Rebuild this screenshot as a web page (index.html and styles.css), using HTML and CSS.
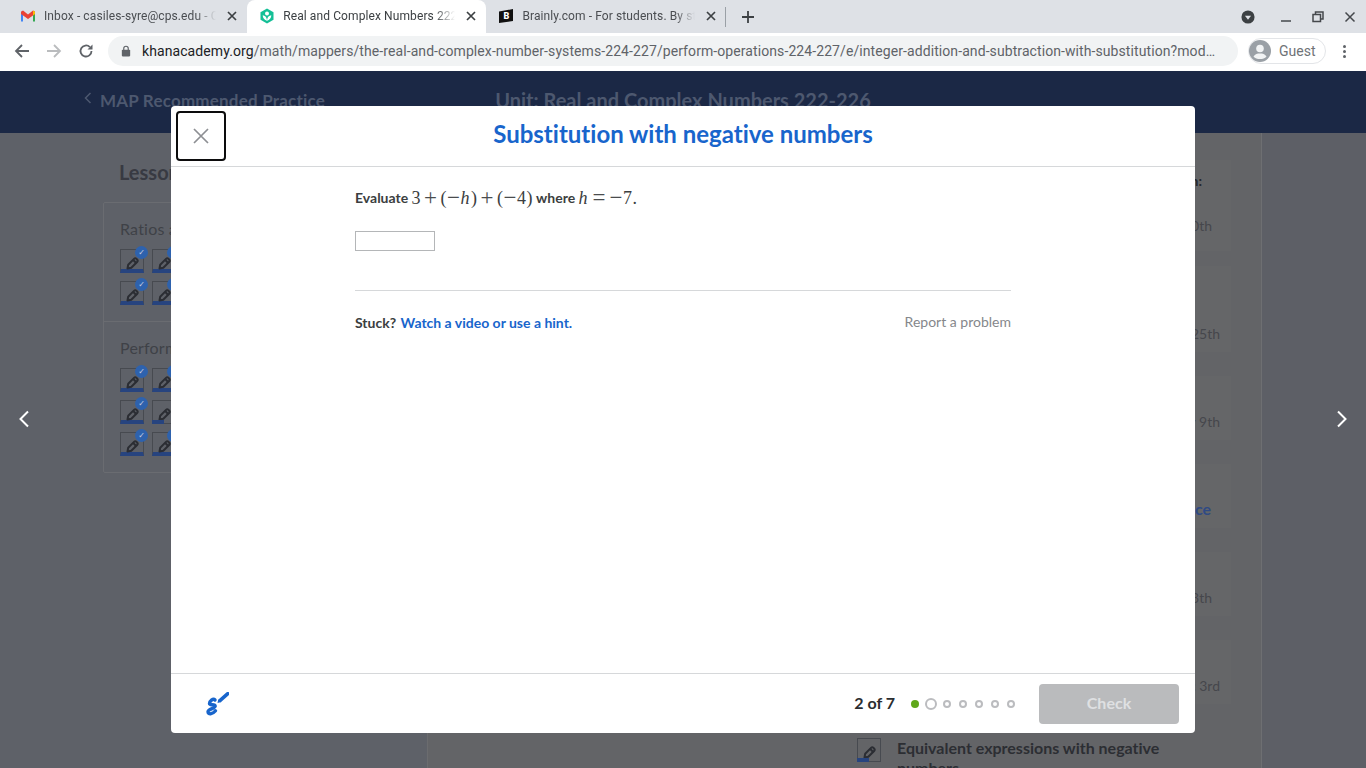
FILE: index.html
```html
<!DOCTYPE html>
<html lang="en">
<head>
<meta charset="utf-8">
<title>Real and Complex Numbers 222-226</title>
<link rel="stylesheet" href="styles.css">
</head>
<body>
<svg class="defs" width="0" height="0" aria-hidden="true">
  <symbol id="pencil" viewBox="0 0 24 24">
    <path d="M7.500 19.500l.7-3.800 5.800-5.800a1.800 1.800 0 0 1 2.500 0l.6.6a1.800 1.800 0 0 1 0 2.500l-5.800 5.800z" fill="none" stroke="currentColor" stroke-width="2" stroke-linejoin="round"/>
    <path d="M13 10.800l3.400 3.400" stroke="currentColor" stroke-width="2"/>
  </symbol>
  <symbol id="tab-x" viewBox="0 0 10 10">
    <path d="M1 1l8 8M9 1l-8 8" stroke="currentColor" stroke-width="1.7" fill="none"/>
  </symbol>
</svg>

<header class="chrome">
  <div class="tabstrip">
    <div class="tab">
      <svg class="favicon" viewBox="0 0 16 16"><path d="M1 13.500V4l2 -1v10.500z" fill="#4285f4"/><path d="M13 13.500V3l2 1v9.500z" fill="#34a853"/><path d="M1 3.800l2-1.300 5 4 5-4 2 1.300V6L8 11 1 6z" fill="#ea4335"/><path d="M13 2.500l2 1.300V6l-2 1.600z" fill="#fbbc04"/></svg>
      <span class="tab-title">Inbox - casiles-syre@cps.edu - C</span>
      <svg class="tab-close"><use href="#tab-x"/></svg>
    </div>
    <div class="tab tab-active">
      <svg class="favicon" viewBox="0 0 16 16"><path d="M8 .5l6.500 3.700v7.600L8 15.500l-6.500-3.700V4.200z" fill="#14bf96"/><circle cx="8" cy="5.500" r="2" fill="#fff"/><path d="M3.700 7.300C6 7.500 7.500 9 8 12.300 8.500 9 10 7.500 12.300 7.300 12.300 10 10.500 12.300 8 12.800 5.500 12.300 3.700 10 3.700 7.300z" fill="#fff"/></svg>
      <span class="tab-title">Real and Complex Numbers 222</span>
      <svg class="tab-close"><use href="#tab-x"/></svg>
    </div>
    <div class="tab">
      <svg class="favicon" viewBox="0 0 16 16"><path d="M1 3.500L15 1v12L1 15z" fill="#111"/></svg>
      <span class="brainly-b">B</span>
      <span class="tab-title">Brainly.com - For students. By st</span>
      <svg class="tab-close"><use href="#tab-x"/></svg>
    </div>
    <span class="tab-sep"></span>
    <svg class="new-tab" viewBox="0 0 12 12"><path d="M6 0v12M0 6h12" stroke="#3c4043" stroke-width="1.800"/></svg>
    <div class="window-controls">
      <span class="profile-dot"><svg viewBox="0 0 16 16"><circle cx="8" cy="8" r="7.500" fill="#3c4043"/><path d="M4.500 6.500h7L8 11z" fill="#dee1e6"/></svg></span>
      <svg class="win-btn" viewBox="0 0 12 12"><path d="M1 10h10" stroke="#45484c" stroke-width="1.500"/></svg>
      <svg class="win-btn" viewBox="0 0 12 12"><path d="M3.500 3V1h7.500v7H8.500" fill="none" stroke="#45484c" stroke-width="1.500"/><rect x="1" y="3.500" width="7.500" height="7" fill="none" stroke="#45484c" stroke-width="1.500"/></svg>
      <svg class="win-btn" viewBox="0 0 12 12"><path d="M1.500 1.500l9 9M10.500 1.500l-9 9" stroke="#45484c" stroke-width="1.500"/></svg>
    </div>
  </div>
  <div class="toolbar">
    <svg class="tool" viewBox="0 0 16 16"><path d="M15 8H2.500M8 2L2 8l6 6" fill="none" stroke="#5f6368" stroke-width="1.800"/></svg>
    <svg class="tool" viewBox="0 0 16 16"><path d="M1 8h12.500M8 2l6 6-6 6" fill="none" stroke="#babcbe" stroke-width="1.800"/></svg>
    <svg class="tool" viewBox="0 0 16 16"><path d="M13.500 8a5.500 5.500 0 1 1-1.600-3.900" fill="none" stroke="#5f6368" stroke-width="1.800"/><path d="M14.500 1.500v5h-5z" fill="#5f6368"/></svg>
    <div class="omnibox">
      <svg class="lock" viewBox="0 0 12 14"><rect x="1" y="5.500" width="10" height="8" rx="1" fill="#5f6368"/><path d="M3.300 6V4a2.700 2.700 0 0 1 5.400 0v2" fill="none" stroke="#5f6368" stroke-width="1.400"/></svg>
      <span class="url"><span class="url-host">khanacademy.org</span>/math/mappers/the-real-and-complex-number-systems-224-227/perform-operations-224-227/e/integer-addition-and-subtraction-with-substitution?mod…</span>
    </div>
    <div class="guest">
      <svg class="avatar" viewBox="0 0 22 22"><circle cx="11" cy="11" r="11" fill="#9aa0a6"/><circle cx="11" cy="8.500" r="3.800" fill="#f1f3f4"/><path d="M4.500 16.500C6 13.800 8.500 13.500 11 13.500s5 .3 6.500 3C16 18.500 13.500 19 11 19s-5-.5-6.500-2.500z" fill="#f1f3f4"/></svg>
      <span>Guest</span>
    </div>
    <div class="kebab"><i></i><i></i><i></i></div>
  </div>
</header>

<main class="app">
  <div class="app-header">
    <div class="crumb">
      <svg class="crumb-chevron" viewBox="0 0 8 12"><path d="M6.500 1L1.500 6l5 5" fill="none" stroke="currentColor" stroke-width="1.500"/></svg>
      <span>MAP Recommended Practice</span>
    </div>
    <div class="unit-title">Unit: Real and Complex Numbers 222-226</div>
  </div>

  <div class="app-body">
    <aside class="sidebar">
      <h2 class="lessons-title">Lessons</h2>
      <div class="lesson-card">
        <section class="lesson-group">
          <h3>Ratios and rates</h3>
          <div class="skill-grid">
            <span class="skill done"><svg><use href="#pencil"/></svg><b class="badge">✓</b></span>
            <span class="skill done"><svg><use href="#pencil"/></svg><b class="badge">✓</b></span>
            <span class="skill done"><svg><use href="#pencil"/></svg><b class="badge">✓</b></span>
            <span class="skill done"><svg><use href="#pencil"/></svg><b class="badge">✓</b></span>
          </div>
        </section>
        <section class="lesson-group">
          <h3>Perform operations</h3>
          <div class="skill-grid">
            <span class="skill done"><svg><use href="#pencil"/></svg><b class="badge">✓</b></span>
            <span class="skill done"><svg><use href="#pencil"/></svg><b class="badge">✓</b></span>
            <span class="skill done"><svg><use href="#pencil"/></svg><b class="badge">✓</b></span>
            <span class="skill partial"><svg><use href="#pencil"/></svg></span>
            <span class="skill done"><svg><use href="#pencil"/></svg><b class="badge">✓</b></span>
            <span class="skill done"><svg><use href="#pencil"/></svg><b class="badge">✓</b></span>
          </div>
        </section>
      </div>
    </aside>

    <div class="center">
      <div class="assign-col">
        <div class="assign assign-head inset"><strong>Up next for you in this lesson:</strong><span>Due Oct 20th</span></div>
        <div class="assign assign-tall"><span>Due Oct 25th</span></div>
        <div class="assign"><span>Due Nov 9th</span></div>
        <div class="assign inset-link"><a>Practice</a></div>
        <div class="assign inset"><span>Due Nov 13th</span></div>
        <div class="assign"><span>Due Dec 3rd</span></div>
        <div class="assign assign-last">
          <span class="skill small"><svg><use href="#pencil"/></svg></span>
          <strong>Equivalent expressions with negative numbers</strong>
        </div>
      </div>
    </div>
    <div class="gutter"></div>
  </div>

  <svg class="nav-arrow nav-prev" viewBox="0 0 12 18"><path d="M10 1.500L2.500 9l7.500 7.500" fill="none" stroke="#fff" stroke-width="2"/></svg>
  <svg class="nav-arrow nav-next" viewBox="0 0 12 18"><path d="M2 1.500L9.500 9 2 16.500" fill="none" stroke="#fff" stroke-width="2"/></svg>

  <div class="modal" role="dialog">
    <div class="modal-head">
      <button class="modal-close" aria-label="Close"><svg viewBox="0 0 16 16"><path d="M1 1l14 14M15 1L1 15" stroke="#8d8f93" stroke-width="1.700" fill="none"/></svg></button>
      <h1>Substitution with negative numbers</h1>
    </div>
    <div class="modal-body">
      <div class="exercise">
        <p class="question">Evaluate <span class="math">3<span class="op bin">+</span>(<span class="op">−</span><i>h</i>)<span class="op bin">+</span>(<span class="op">−</span>4)</span> where <span class="math"><i>h</i><span class="op rel">=</span><span class="op">−</span>7.</span></p>
        <div class="answer"></div>
        <div class="hint-row">
          <div class="stuck">Stuck? <a>Watch a video or use a hint.</a></div>
          <a class="report">Report a problem</a>
        </div>
      </div>
    </div>
    <div class="modal-foot">
      <svg class="scribble" viewBox="0 0 24 24"><path d="M10 8C8 5.800 4.500 9.500 4.500 11.500C4.500 13.800 10 11.800 10.200 14.200C10.400 16.300 3 17 3 19.800C3 22.800 7.500 22.500 10.500 18.800" fill="none" stroke="#1865cc" stroke-width="3.400" stroke-linecap="round" stroke-linejoin="round"/><path d="M15.200 8.300L22.800 1.700" stroke="#1865cc" stroke-width="3.600" stroke-linecap="round"/><path d="M12.500 11L13.300 7.200 16.400 10z" fill="#1865cc"/></svg>
      <div class="progress">
        <span class="progress-label">2 of 7</span>
        <div class="dots">
          <i class="dot dot-done"></i><i class="dot dot-now"></i><i class="dot"></i><i class="dot"></i><i class="dot"></i><i class="dot"></i><i class="dot"></i>
        </div>
        <button class="check">Check</button>
      </div>
    </div>
  </div>
</main>
</body>
</html>
```
FILE: styles.css
```css
* { box-sizing: border-box; }
html, body { margin: 0; height: 768px; overflow: hidden; }
body { display: flex; flex-direction: column; font-family: Lato, "Liberation Sans", sans-serif; font-variant-ligatures: none; background: #fff; }
.defs { position: absolute; }
h1, h2, h3, p { margin: 0; }

/* browser chrome */
.chrome { flex: none; height: 71px; font-family: Roboto, "Liberation Sans", sans-serif; }
.tabstrip { height: 33px; background: #dee1e6; display: flex; align-items: center; padding-left: 8px; position: relative; }
.tab { width: 239.200px; height: 33px; display: flex; align-items: center; padding: 0 8px 1px 12px; color: #4a4d51; font-size: 12px; position: relative; flex: none; }
.tab-active { background: #fff; border-radius: 8px 8px 0 0; color: #3c4043; }
.favicon { width: 16px; height: 16px; flex: none; margin-right: 8px; }
.tab-title { flex: 1; overflow: hidden; white-space: nowrap; letter-spacing: .1px; -webkit-mask-image: linear-gradient(to right, #000 calc(100% - 22px), transparent calc(100% - 2px)); mask-image: linear-gradient(to right, #000 calc(100% - 22px), transparent calc(100% - 2px)); }
.tab-close { width: 10px; height: 10px; color: #3c4043; flex: none; margin: 0 2px 0 9px; }
.brainly-b { position: absolute; left: 12px; width: 16px; text-align: center; color: #fff; font: 900 9px Roboto, sans-serif; }
.tab-sep { width: 1px; height: 20px; margin-left: -1px; background: #9aa0a6; flex: none; }
.new-tab { width: 12px; height: 12px; margin-left: 16px; flex: none; }
.window-controls { margin-left: auto; display: flex; align-items: center; padding-right: 10px; }
.profile-dot { width: 14px; height: 14px; margin-right: 5px; display: flex; }
.win-btn { width: 12px; height: 12px; margin-left: 20px; }
.toolbar { height: 38px; background: #fff; display: flex; align-items: center; padding: 0 0 2px 14px; }
.tool { width: 16px; height: 16px; flex: none; margin-right: 16px; }
.omnibox { width: 1130px; height: 30px; margin-left: -2px; background: #f1f3f4; border-radius: 15px; display: flex; align-items: center; padding-left: 13px; flex: none; }
.lock { width: 10px; height: 12px; margin-right: 11px; flex: none; }
.url { font-size: 14px; color: #5f6368; white-space: nowrap; overflow: hidden; letter-spacing: .085px; }
.url-host { color: #202124; }
.guest { width: 78px; height: 26px; margin-left: 10px; border: 1px solid #e3e5e8; border-radius: 13px; display: flex; align-items: center; padding-left: 0; color: #6f7377; font-size: 14px; gap: 8px; flex: none; }
.avatar { width: 22px; height: 22px; }
.kebab { margin-left: 17px; display: flex; flex-direction: column; gap: 2px; }
.kebab i { width: 3px; height: 3px; border-radius: 50%; background: #5f6368; }

/* page behind the dialog */
.app { flex: 1; position: relative; overflow: hidden; background: #5e6168; display: flex; flex-direction: column; }
.app-header { height: 62px; flex: none; background: #1b2845; position: relative; display: flex; justify-content: center; padding-top: 17px; color: #4d586f; font-weight: 700; }
.crumb { position: absolute; left: 84px; top: 19px; display: flex; align-items: flex-start; gap: 8px; font-size: 17px; letter-spacing: .2px; }
.crumb-chevron { width: 8px; height: 12px; margin-top: 2px; }
.unit-title { font-size: 20px; }
.app-body { flex: 1; display: flex; min-height: 0; }
.sidebar { width: 428px; flex: none; border-right: 1px solid #6b6c6f; padding: 26px 0 0 103px; }
.lessons-title { font-size: 20px; line-height: 26px; font-weight: 700; color: #383a42; padding-left: 16px; margin-bottom: 17px; }
.lesson-card { border: 1px solid #6a6c71; border-radius: 2px; width: 400px; }
.lesson-group { padding: 16px; }
.lesson-group + .lesson-group { border-top: 1px solid #6a6c71; }
.lesson-group h3 { font-size: 16px; line-height: 20px; font-weight: 400; color: #3f4147; margin-bottom: 10px; letter-spacing: .2px; }
.skill-grid { display: grid; grid-template-columns: repeat(2, 24px); gap: 8px; }
.skill { width: 24px; height: 24px; border: 1px solid #474a50; border-bottom: 4px solid #27447f; position: relative; display: block; color: #2b2d33; }
.skill svg { position: absolute; left: -1px; top: -1px; width: 24px; height: 24px; }
.skill.partial { border-bottom: 1px solid #474a50; }
.skill.partial::after, .skill.small::after { content: ""; position: absolute; left: -1px; bottom: -1px; width: 12px; height: 4px; background: #27447f; }
.badge { position: absolute; right: -5px; top: -4px; width: 13px; height: 13px; border-radius: 50%; background: #2e62ad; color: #c9d3e6; font: 700 8px/13px "DejaVu Sans", sans-serif; text-align: center; }
.center { flex: 1; background: #636467; display: flex; justify-content: flex-end; padding-right: 30px; }
.gutter { width: 105px; flex: none; background: #5d5f66; border-left: 1px solid #6e6f72; }
.assign-col { width: 385px; padding-top: 27px; display: flex; flex-direction: column; gap: 24px; }
.assign { background: #656668; height: 64px; flex: none; padding: 36px 11px 0 12px; display: flex; justify-content: flex-end; font-size: 14px; line-height: 20px; color: #45474c; white-space: nowrap; position: relative; }
.assign.inset { padding-right: 19px; }
.assign.inset-link { padding: 35px 20px 0 12px; font-size: 16px; }
.assign strong { position: absolute; right: 29px; top: 11px; font-size: 14px; color: #26282d; }
.assign span { display: block; }
.assign a { color: #2f4a84; font-weight: 700; }
.assign-head { height: 91px; padding-top: 56px; margin-bottom: -9px; }
.assign-tall { height: 86px; padding-top: 58px; }
.assign-last { height: 60px; padding: 10px 12px 0 11px; justify-content: flex-start; background: transparent; gap: 16px; }
.assign-last strong { position: static; font-size: 16px; line-height: 20px; white-space: normal; color: #2c2e33; }
.skill.small { border-bottom: 1px solid #474a50; flex: none; }
.nav-arrow { position: absolute; width: 12px; height: 18px; top: 339px; }
.nav-prev { left: 18px; }
.nav-next { left: 1336px; }

/* dialog */
.modal { position: absolute; left: 171px; top: 35px; width: 1024px; height: 627px; background: #fff; border-radius: 4px; display: flex; flex-direction: column; }
.modal-head { height: 61px; flex: none; border-bottom: 1px solid #d6d8da; display: flex; justify-content: center; position: relative; padding-top: 12px; }
.modal-head h1 { font-size: 24px; line-height: 32px; font-weight: 700; color: #1865cc; }
.modal-close { position: absolute; left: 5px; top: 5px; width: 50px; height: 50px; padding: 0; background: #fff; border: 2px solid #0c0c0d; border-radius: 4px; display: flex; align-items: center; justify-content: center; }
.modal-close svg { width: 16px; height: 16px; }
.modal-body { flex: 1; display: flex; justify-content: center; }
.exercise { width: 656px; padding-top: 19px; }
.question { font-size: 14px; line-height: 24px; height: 24px; font-weight: 700; color: #3b3e40; white-space: nowrap; }
.math { font: 400 18px/24px "Liberation Serif", serif; letter-spacing: .5px; vertical-align: -1px; }
.math i { margin-right: 1px; }
.op { font-size: 23px; line-height: 0; vertical-align: -1px; font-weight: 400; color: #4a4c4e; }
.op.bin { margin: 0 3px; }
.op.rel { margin: 0 3.500px; }
.answer { width: 80px; height: 20px; border: 1px solid #b4b6b8; margin-top: 21px; }
.hint-row { margin-top: 39px; border-top: 1px solid #d6d8da; padding-top: 23px; display: flex; justify-content: space-between; font-size: 14px; line-height: 18px; }
.stuck { font-weight: 700; color: #3b3e40; }
.stuck a { color: #1865cc; margin-left: 1px; }
.report { color: #85878b; margin-top: -1px; }
.modal-foot { height: 60px; flex: none; border-top: 1px solid #d6d8da; display: flex; align-items: center; justify-content: space-between; padding: 0 16px 0 34px; }
.scribble { width: 24px; height: 24px; }
.progress { display: flex; align-items: center; }
.progress-label { font-size: 16px; line-height: 20px; font-weight: 700; color: #2b2d30; margin: 0 16px 2px 0; }
.dots { display: flex; align-items: center; margin-right: 24px; }
.dot { width: 8px; height: 8px; border: 2px solid #bbbcbf; border-radius: 50%; margin-right: 8px; flex: none; }
.dot:last-child { margin-right: 0; }
.dot-done { background: #5fa71a; border: 0; margin-right: 6px; }
.dot-now { width: 12px; height: 12px; margin-right: 6px; }
.check { width: 140px; height: 40px; border: 0; border-radius: 4px; padding: 0 0 2px; background: #babbbd; color: #dfe0e2; font: 700 16px Lato, sans-serif; }
```
